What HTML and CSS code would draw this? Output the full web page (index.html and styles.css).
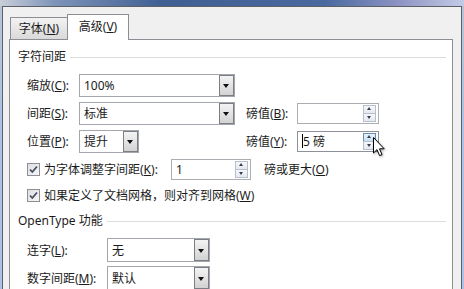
FILE: index.html
```html
<!DOCTYPE html>
<html lang="zh-CN">
<head>
<meta charset="utf-8">
<title>字体 - 高级</title>
<link rel="stylesheet" href="styles.css">
</head>
<body>
<div class="screen">
  <div class="glow"></div>
  <div class="window">
    <div class="dialog">
      <div class="tabs">
        <div class="tab">字体(<u>N</u>)</div>
        <div class="tab active">高级(<u>V</u>)</div>
      </div>
      <div class="panel">
        <div class="group-head"><span>字符间距</span><i class="rule"></i></div>

        <div class="row">
          <span class="lbl">缩放(<u>C</u>):</span>
          <div class="cell"><div class="select w156"><span class="val">100%</span><b class="drop"></b></div></div>
        </div>

        <div class="row">
          <span class="lbl">间距(<u>S</u>):</span>
          <div class="cell"><div class="select w156"><span class="val">标准</span><b class="drop"></b></div></div>
          <span class="lbl2">磅值(<u>B</u>):</span>
          <div class="spin w82"><span class="val"></span><div class="arrows"><b class="up"></b><b class="dn"></b></div></div>
        </div>

        <div class="row">
          <span class="lbl">位置(<u>P</u>):</span>
          <div class="cell"><div class="select w60"><span class="val">提升</span><b class="drop"></b></div></div>
          <span class="lbl2">磅值(<u>Y</u>):</span>
          <div class="spin w82 focus"><span class="val"><i class="caret"></i>5 磅</span><div class="arrows"><b class="up hot"></b><b class="dn"></b></div></div>
        </div>

        <div class="row">
          <span class="check"><svg width="13" height="13" viewBox="0 0 13 13"><path d="M3 6.5 L5.3 9 L10 3.5" fill="none" stroke="#4a4d5e" stroke-width="1.8"/></svg></span>
          <span class="klbl">为字体调整字间距(<u>K</u>):</span>
          <div class="spin w80"><span class="val">1</span><div class="arrows"><b class="up"></b><b class="dn"></b></div></div>
          <span class="after">磅或更大(<u>O</u>)</span>
        </div>

        <div class="row short">
          <span class="check"><svg width="13" height="13" viewBox="0 0 13 13"><path d="M3 6.5 L5.3 9 L10 3.5" fill="none" stroke="#4a4d5e" stroke-width="1.8"/></svg></span>
          <span class="klbl">如果定义了文档网格，则对齐到网格(<u>W</u>)</span>
        </div>

        <div class="group-head second"><span>OpenType 功能</span><i class="rule"></i></div>

        <div class="row">
          <span class="lbl wide">连字(<u>L</u>):</span>
          <div class="select w103"><span class="val">无</span><b class="drop"></b></div>
        </div>

        <div class="row">
          <span class="lbl wide">数字间距(<u>M</u>):</span>
          <div class="select w103"><span class="val">默认</span><b class="drop"></b></div>
        </div>
      </div>
    </div>
  </div>
  <svg class="cursor" width="14" height="22" viewBox="0 0 14 22">
    <path d="M1.5 1.5 L1.5 17 L5 13.6 L7.6 19.6 L10 18.6 L7.5 12.8 L12.2 12.8 Z" fill="#ffffff" stroke="#000000" stroke-width="1" stroke-linejoin="miter"/>
  </svg>
</div>
</body>
</html>
```

FILE: styles.css
```css
* { box-sizing: border-box; }

html, body {
  margin: 0;
  padding: 0;
}

body {
  width: 464px;
  height: 289px;
  overflow: hidden;
  font-family: "Noto Sans", "Noto Sans CJK SC", sans-serif;
  font-size: 12px;
  color: #1b1b1b;
}

.screen {
  position: relative;
  width: 464px;
  height: 289px;
  overflow: hidden;
  display: flex;
  flex-direction: column;
  background: linear-gradient(to bottom, #b9c3d6 0, #a9c4e8 40%, #a9c4e8 100%);
}

.glow {
  height: 6px;
  flex: none;
  background: linear-gradient(to right, #c9ced8 0, #7d93b8 12%, #3f5f93 35%, #4a6a9f 70%, #8d93c3 86%, #c2cce6 100%);
}

.window {
  flex: 1;
  display: flex;
  margin-left: 2px;
  width: 460px;
  border: 1px solid #5e6066;
  border-bottom: none;
  background: #f0f0f0;
}

.dialog {
  flex: 1;
  display: flex;
  flex-direction: column;
}

.tabs {
  display: flex;
  align-items: flex-end;
  height: 32px;
  padding-left: 7px;
  flex: none;
}

.tab {
  height: 22px;
  width: 58px;
  border: 1px solid #8c8e94;
  border-bottom: none;
  background: linear-gradient(to bottom, #f2f2f2 0, #e6e6e6 50%, #d9d9d9 100%);
  display: flex;
  align-items: center;
  justify-content: center;
  line-height: 14px;
  padding-top: 1px;
}

.tab.active {
  height: 26px;
  width: 62px;
  margin-left: -1px;
  margin-bottom: -1px;
  background: #ffffff;
  position: relative;
  z-index: 1;
  padding-top: 0;
  padding-bottom: 2px;
}

.panel {
  flex: 1;
  margin-left: 6px;
  width: 444px;
  border: 1px solid #8c8e94;
  background: #ffffff;
  display: flex;
  flex-direction: column;
}

.group-head {
  display: flex;
  align-items: center;
  height: 16px;
  margin-top: 9px;
  margin-bottom: 6px;
  padding-left: 8px;
  line-height: 16px;
  flex: none;
}

.group-head.second {
  margin-top: 6px;
  margin-bottom: 7px;
}

.rule {
  flex: 1;
  height: 1px;
  background: #dcdcdc;
  margin-left: 4px;
  margin-right: 6px;
}

.row {
  display: flex;
  align-items: center;
  height: 28px;
  padding-left: 17px;
  flex: none;
}

.row.short {
  height: 24px;
}

.lbl {
  width: 52px;
  white-space: nowrap;
}

.lbl.wide {
  width: 80px;
}

.cell {
  width: 156px;
}

.lbl2 {
  margin-left: 11px;
  width: 51px;
  white-space: nowrap;
}

.select {
  height: 23px;
  border: 1px solid #a3a6ad;
  background: #ffffff;
  display: flex;
  align-items: stretch;
}

.w156 { width: 156px; }
.w60 { width: 60px; }
.w103 { width: 103px; height: 24px; }
.w82 { width: 82px; }
.w80 { width: 80px; }

.val {
  flex: 1;
  display: flex;
  align-items: center;
  padding-left: 4px;
  white-space: nowrap;
}

.drop {
  width: 15px;
  border: 1px solid #7b7e84;
  margin: 0;
  background: linear-gradient(to bottom, #f3f3f3 0, #e3e3e3 50%, #d2d2d2 100%);
  position: relative;
}

.drop::after {
  content: "";
  position: absolute;
  left: 3px;
  top: 50%;
  margin-top: -1px;
  border-left: 3.5px solid transparent;
  border-right: 3.5px solid transparent;
  border-top: 4px solid #111111;
}

.spin {
  height: 21px;
  border: 1px solid #abadb3;
  background: #ffffff;
  display: flex;
  align-items: stretch;
}

.spin.focus {
  border-color: #8e9198;
}

.arrows {
  width: 13px;
  margin: 1px 2px 1px 0;
  display: flex;
  flex-direction: column;
}

.arrows b {
  flex: 1;
  border: 1px solid #b8bfcc;
  background: linear-gradient(to bottom, #f6f8fb 0, #e5e9f0 100%);
  position: relative;
}

.arrows b + b {
  margin-top: -1px;
}

.arrows b.hot {
  border-color: #6d8ab5;
  background: linear-gradient(to bottom, #e8f3fc 0, #c6dff5 100%);
}

.arrows b::after {
  content: "";
  position: absolute;
  left: 3px;
  top: 50%;
  border-left: 2.5px solid transparent;
  border-right: 2.5px solid transparent;
}

.arrows b.up::after {
  margin-top: -2px;
  border-bottom: 3px solid #3a3f4a;
}

.arrows b.dn::after {
  margin-top: -1px;
  border-top: 3px solid #3a3f4a;
}

.caret {
  display: inline-block;
  width: 1px;
  height: 14px;
  background: #000000;
  margin-right: 0;
}

.check {
  width: 13px;
  height: 13px;
  border: 1px solid #8e8f93;
  background: linear-gradient(135deg, #dcdfe4 0, #f5f6f8 100%);
  display: flex;
  align-items: center;
  justify-content: center;
  flex: none;
}

.check svg {
  display: block;
  margin: -1px;
}

.klbl {
  margin-left: 4px;
  width: 127px;
  white-space: nowrap;
}

.after {
  margin-left: 13px;
  white-space: nowrap;
}

u {
  text-decoration: underline;
  text-underline-offset: 1px;
}

.cursor {
  position: absolute;
  left: 372px;
  top: 136px;
  filter: drop-shadow(1px 1px 1px rgba(0, 0, 0, 0.35));
}
```
